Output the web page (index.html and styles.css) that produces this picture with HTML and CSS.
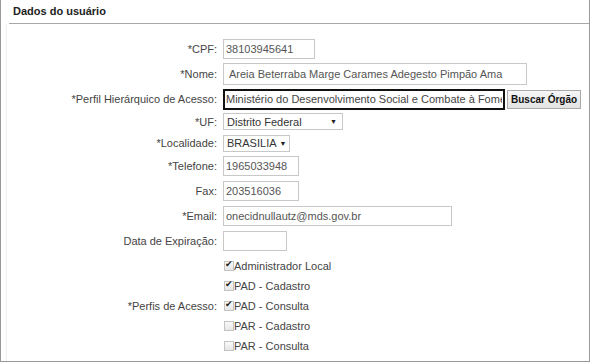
FILE: index.html
```html
<!DOCTYPE html>
<html lang="pt-BR">
<head>
  <meta charset="UTF-8" />
  <title>Dados do usuário</title>
  <link rel="stylesheet" href="styles.css">
</head>
<body>
  <div class="painel">
    <div class="painel-titulo">Dados do usuário</div>

    <div class="formulario">
      <div class="linha l-cpf">
        <label>*CPF:</label>
        <div><input class="campo w-cpf" type="text" value="38103945641"></div>
      </div>
      <div class="linha l-nome">
        <label>*Nome:</label>
        <div><input class="campo w-nome" type="text" value="Areia Beterraba Marge Carames Adegesto Pimpão Ama"></div>
      </div>
      <div class="linha l-perfil">
        <label>*Perfil Hierárquico de Acesso:</label>
        <div class="grupo">
          <input class="campo w-orgao foco" type="text" value="Ministério do Desenvolvimento Social e Combate à Fome">
          <button class="botao" type="button">Buscar Órgão</button>
        </div>
      </div>
      <div class="linha l-uf">
        <label>*UF:</label>
        <div>
          <span class="seletor w-uf"><span>Distrito Federal</span><span class="seta">▼</span></span>
        </div>
      </div>
      <div class="linha l-local">
        <label>*Localidade:</label>
        <div>
          <span class="seletor w-local"><span>BRASILIA</span><span class="seta">▼</span></span>
        </div>
      </div>
      <div class="linha l-tel">
        <label>*Telefone:</label>
        <div><input class="campo w-tel" type="text" value="1965033948"></div>
      </div>
      <div class="linha l-fax">
        <label>Fax:</label>
        <div><input class="campo w-tel" type="text" value="203516036"></div>
      </div>
      <div class="linha l-email">
        <label>*Email:</label>
        <div><input class="campo w-email" type="text" value="onecidnullautz@mds.gov.br"></div>
      </div>
      <div class="linha l-data">
        <label>Data de Expiração:</label>
        <div><input class="campo w-data" type="text" value=""></div>
      </div>
      <div class="linha l-perfis">
        <label>*Perfis de Acesso:</label>
        <div class="opcoes">
          <label class="opcao"><input type="checkbox" checked>Administrador Local</label>
          <label class="opcao"><input type="checkbox" checked>PAD - Cadastro</label>
          <label class="opcao"><input type="checkbox" checked>PAD - Consulta</label>
          <label class="opcao"><input type="checkbox">PAR - Cadastro</label>
          <label class="opcao"><input type="checkbox">PAR - Consulta</label>
        </div>
      </div>
    </div>
  </div>
</body>
</html>
```

FILE: styles.css
```css
body {
  margin: 0;
  padding: 0;
  font-family: 'Liberation Sans', Arial, sans-serif;
  font-size: 11px;
  color: #444;
  background: #fff;
}

.painel {
  width: 588px;
  height: 361px;
  border: 1px solid #999;
  border-top: none;
  box-sizing: content-box;
}

.painel-titulo {
  margin-left: 8px;
  height: 23px;
  line-height: 22px;
  padding-left: 4px;
  border-bottom: 1px solid #a8a8a8;
  font-weight: bold;
  color: #222;
}

.formulario {
  margin-left: 5px;
  border-left: 1px solid #f0f0f0;
  padding-top: 12px;
  height: 325px;
}

/* cada linha: rótulo à direita, campo à esquerda */
.linha {
  display: grid;
  grid-template-columns: 210px 1fr;
  column-gap: 6px;
  align-items: center;
}

.linha > label {
  text-align: right;
  white-space: nowrap;
}

.l-cpf { height: 25px; }
.l-nome { height: 26px; }
.l-perfil { height: 24px; }
.l-uf { height: 21px; }
.l-local { height: 22px; }
.l-tel { height: 24px; }
.l-fax { height: 25px; }
.l-email { height: 25px; }
.l-data { height: 25px; }
.l-perfis { height: 100px; margin-top: 3px; }

.campo {
  display: block;
  box-sizing: border-box;
  height: 20px;
  margin: 0;
  padding: 0 2px;
  border: 1px solid #c8c8c8;
  font-family: 'Liberation Sans', Arial, sans-serif;
  font-size: 11px;
  color: #555;
  background: #fff;
}

.w-cpf { width: 92px; height: 20px; }
.w-nome { width: 304px; height: 22px; padding-left: 5px; }
.w-tel { width: 76px; }
.w-email { width: 229px; }
.w-data { width: 64px; }

.grupo {
  display: flex;
  align-items: center;
  gap: 2px;
}

.w-orgao {
  width: 282px;
  height: 21px;
  padding: 0 1px;
  color: #444;
}

.foco {
  border: 2px solid #111;
}

.botao {
  height: 19px;
  padding: 0 3px;
  border: 1px solid #aaa;
  background: linear-gradient(#f6f6f6, #e2e2e2);
  font-family: 'Liberation Sans', Arial, sans-serif;
  font-size: 10px;
  font-weight: bold;
  color: #111;
  white-space: nowrap;
}

.seletor {
  display: flex;
  align-items: center;
  justify-content: space-between;
  box-sizing: border-box;
  height: 17px;
  padding: 0 5px 0 3px;
  border: 1px solid #c8c8c8;
  color: #333;
  background: #fff;
}

.w-uf { width: 120px; }
.w-local { width: 67px; gap: 3px; }

.seta {
  font-size: 7px;
  color: #222;
}

.opcoes {
  display: flex;
  flex-direction: column;
}

.opcao {
  display: flex;
  align-items: center;
  height: 20px;
  color: #444;
}

.opcao input {
  appearance: none;
  -webkit-appearance: none;
  position: relative;
  box-sizing: border-box;
  width: 10px;
  height: 10px;
  margin: 0 0 0 1px;
  border: 1px solid #c4c4c4;
  background: linear-gradient(#fafafa, #e6e6e6);
}

.opcao input:checked::after {
  content: "✔";
  position: absolute;
  left: 0;
  top: -3px;
  font-size: 9px;
  color: #222;
}
```
